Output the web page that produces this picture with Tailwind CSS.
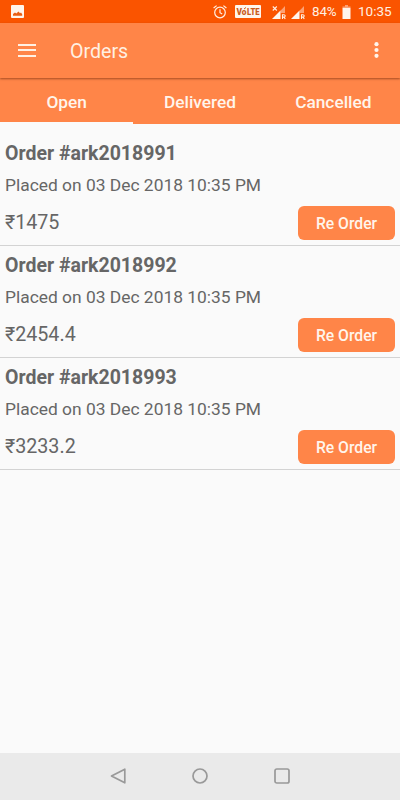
<!DOCTYPE html>
<html lang="en">
<head>
    <meta charset="UTF-8">
    <meta name="viewport" content="width=device-width, initial-scale=1.0">
    <title>Orders</title>
    <script src="https://cdn.jsdelivr.net/npm/@tailwindcss/browser@4"></script>
</head>
<body class="flex h-screen flex-col overflow-hidden bg-[#fafafa] font-['Roboto',sans-serif] text-[#666]">
    <!-- Status Bar -->
    <div class="flex h-[23px] shrink-0 items-center bg-[#fa5400] pr-2 pl-[11px] text-[#fff0e3]">
        <svg class="h-[13px] w-[13px]" viewBox="0 0 13 13">
            <rect width="13" height="13" rx="1" fill="#fff5ec"/>
            <path d="M2 10.8V9l2-1.5 1.3 1L7.5 6.5 9 8.3l1-.7 1.2 1.6v1.6z" fill="#e95e13"/>
        </svg>
        <!-- Alarm -->
        <svg class="mt-px ml-auto h-[14px] w-[14px]" viewBox="0 0 14 14" fill="none" stroke="#fff0e3" stroke-width="1.2">
            <circle cx="7" cy="7.5" r="5.3"/>
            <path d="M7 4.3v3.4l2.2 1.4M.6 3 3.6.6M13.4 3l-3-2.4"/>
        </svg>
        <!-- VoLTE -->
        <svg class="ml-2 h-[13px] w-[26px]" viewBox="0 0 26 13">
            <rect width="26" height="13" rx="1" fill="#fff5ec"/>
            <text x="1.5" y="9.8" font-size="8.5" font-weight="900" fill="#c95a20" textLength="10" lengthAdjust="spacingAndGlyphs">Vo</text>
            <text x="12" y="9.8" font-size="8.5" font-weight="900" fill="#c95a20" textLength="12.5" lengthAdjust="spacingAndGlyphs">LTE</text>
            <path d="M9 4 11 2.5" stroke="#c95a20"/>
        </svg>
        <!-- Signal 1 -->
        <svg class="mt-px ml-[11px] h-[15px] w-[14px]" viewBox="0 0 14 15">
            <path d="M13 1v7H8.5V5.7z" fill="#fda173"/>
            <path d="M8.5 5.5V14H0z" fill="#fff5ec"/>
            <path d="M.8 1.5l4 4M4.8 1.5l-4 4" stroke="#fff0e3" stroke-width="1.1"/>
            <path d="M10.5 14V9.8H12a1.1 1.1 0 0 1 0 2.3h-1.5m1.4 0 1.4 1.9" fill="none" stroke="#fff0e3" stroke-width="1.1"/>
        </svg>
        <!-- Signal 2 -->
        <svg class="mt-px ml-[5px] h-[15px] w-[14px]" viewBox="0 0 14 15">
            <path d="M13 1v7H8.5V5.7z" fill="#fda173"/>
            <path d="M8.5 5.5V14H0z" fill="#fff5ec"/>
            <path d="M10.5 14V9.8H12a1.1 1.1 0 0 1 0 2.3h-1.5m1.4 0 1.4 1.9" fill="none" stroke="#fff0e3" stroke-width="1.1"/>
        </svg>
        <span class="mt-px ml-[7px] w-[26px] text-[13.4px] leading-[14px] tracking-[-0.1px] whitespace-nowrap">84%</span>
        <svg class="mt-px ml-1 h-[14px] w-[9px]" viewBox="0 0 9 14">
            <path d="M.5 1.5H3V0h3v1.5h2.5V3h-8z" fill="#fda173"/>
            <path d="M.5 3h8v11h-8z" fill="#fff5ec"/>
        </svg>
        <span class="mb-px ml-[7px] w-[34px] text-[13.5px] leading-[14px]">10:35</span>
    </div>

    <!-- App Bar -->
    <header class="relative z-10 flex h-[55px] shrink-0 items-center bg-[#ff8548] pr-[21px] pl-[18px] text-[#fff0e3] shadow-[0_1px_2px_rgba(90,30,0,0.55)]">
        <button aria-label="Menu" class="mb-px flex h-[13px] w-[18px] flex-col justify-between">
            <span class="h-[2px] w-full bg-[#fff0e3]"></span>
            <span class="h-[2px] w-full bg-[#fff0e3]"></span>
            <span class="h-[2px] w-full bg-[#fff0e3]"></span>
        </button>
        <h1 class="mt-[3px] ml-[34px] text-[19.6px] leading-none">Orders</h1>
        <svg class="mb-px ml-auto h-[16px] w-[5px]" viewBox="0 0 5 16" fill="#fff5ec">
            <circle cx="2.5" cy="2.2" r="2.1"/>
            <circle cx="2.5" cy="8" r="2.1"/>
            <circle cx="2.5" cy="13.8" r="2.1"/>
        </svg>
    </header>

    <!-- Tabs -->
    <nav class="grid h-[46px] shrink-0 grid-cols-3 bg-[#ff8548] pt-1 text-center text-[17.3px] leading-10 font-medium text-[#fff5ec]">
        <a class="border-b-2 border-[#fafafa]">Open</a>
        <a>Delivered</a>
        <a>Cancelled</a>
    </nav>

    <!-- Order List -->
    <main class="grow pt-[10px]">
        <section class="h-[112px] border-b border-[#d3d3d3] px-[5px] pt-2">
            <h2 class="text-[19.5px] leading-6 font-bold">Order #ark2018991</h2>
            <p class="mt-[7px] text-[17.4px] leading-6">Placed on 03 Dec 2018 10:35 PM</p>
            <div class="mt-[9px] flex h-[34px] items-center justify-between">
                <span class="pb-px text-[19.7px] leading-none">₹1475</span>
                <button class="h-[34px] w-[97px] rounded-md bg-[#ff8548] pt-0.5 text-[15.7px] font-medium text-[#fff5ec]">Re Order</button>
            </div>
        </section>
        <section class="h-[112px] border-b border-[#d3d3d3] px-[5px] pt-2">
            <h2 class="text-[19.5px] leading-6 font-bold">Order #ark2018992</h2>
            <p class="mt-[7px] text-[17.4px] leading-6">Placed on 03 Dec 2018 10:35 PM</p>
            <div class="mt-[9px] flex h-[34px] items-center justify-between">
                <span class="pb-px text-[19.7px] leading-none">₹2454.4</span>
                <button class="h-[34px] w-[97px] rounded-md bg-[#ff8548] pt-0.5 text-[15.7px] font-medium text-[#fff5ec]">Re Order</button>
            </div>
        </section>
        <section class="h-[112px] border-b border-[#d3d3d3] px-[5px] pt-2">
            <h2 class="text-[19.5px] leading-6 font-bold">Order #ark2018993</h2>
            <p class="mt-[7px] text-[17.4px] leading-6">Placed on 03 Dec 2018 10:35 PM</p>
            <div class="mt-[9px] flex h-[34px] items-center justify-between">
                <span class="pb-px text-[19.7px] leading-none">₹3233.2</span>
                <button class="h-[34px] w-[97px] rounded-md bg-[#ff8548] pt-0.5 text-[15.7px] font-medium text-[#fff5ec]">Re Order</button>
            </div>
        </section>
    </main>

    <!-- Navigation Bar -->
    <footer class="flex h-[47px] shrink-0 items-center justify-center gap-[66px] bg-[#eaeaea] pb-px">
        <svg class="h-4 w-4" viewBox="0 0 16 16" fill="none" stroke="#999" stroke-width="1.7" stroke-linejoin="round">
            <path d="M14.8 1.2v13.6L1.5 8z"/>
        </svg>
        <svg class="h-4 w-4" viewBox="0 0 16 16" fill="none" stroke="#999" stroke-width="1.7">
            <circle cx="8" cy="8" r="7"/>
        </svg>
        <svg class="h-4 w-4" viewBox="0 0 16 16" fill="none" stroke="#999" stroke-width="1.7">
            <rect x="1" y="1" width="14" height="14" rx="1.8"/>
        </svg>
    </footer>
</body>
</html>
